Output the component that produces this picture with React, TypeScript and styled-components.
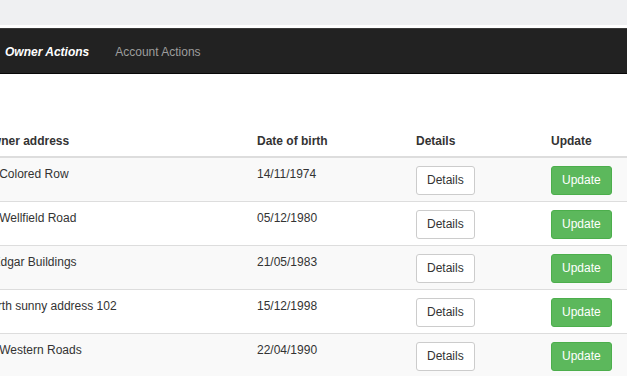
import React from "react";
import styled, { createGlobalStyle } from "styled-components";

const GlobalStyle = createGlobalStyle`
  html, body {
    margin: 0;
    padding: 0;
    background: #ffffff;
    overflow: hidden;
  }
  body {
    font-family: "Liberation Sans", Arial, Helvetica, sans-serif;
    font-size: 12px;
    line-height: 17px;
    color: #333333;
  }
`;

const Page = styled.div`
  width: 627px;
  height: 376px;
  overflow: hidden;
`;

const TopStrip = styled.div`
  height: 25px;
  background: #eff0f2;
`;

const Navbar = styled.nav`
  box-sizing: border-box;
  margin-top: 3px;
  height: 46px;
  padding-top: 2px;
  background: #222222;
  border-top: 1px solid #3a3a3a;
  border-bottom: 1px solid #080808;
  display: flex;
  align-items: center;
`;

const NavList = styled.ul`
  list-style: none;
  margin: 0 0 0 -8px;
  padding: 0;
  display: flex;
`;

const NavLink = styled.li<{ $active?: boolean }>`
  padding: 0 13px;
  font-size: 12px;
  line-height: 17px;
  color: ${(p) => (p.$active ? "#ffffff" : "#9d9d9d")};
  font-weight: ${(p) => (p.$active ? 700 : 400)};
  font-style: ${(p) => (p.$active ? "italic" : "normal")};
`;

const Main = styled.div`
  padding-top: 52px;
  overflow: hidden;
`;

const Table = styled.table`
  margin-left: -24.5px;
  width: 760px;
  table-layout: fixed;
  border-collapse: collapse;
  border-spacing: 0;
`;

const HeadCell = styled.th`
  text-align: left;
  font-weight: 700;
  color: #333333;
  padding: 7px 7px 6px;
  border-bottom: 2px solid #dddddd;
  vertical-align: bottom;
`;

const Row = styled.tr<{ $striped: boolean }>`
  background: ${(p) => (p.$striped ? "#f9f9f9" : "#ffffff")};
`;

const Cell = styled.td`
  padding: 8px 7px 6px;
  vertical-align: top;
  border-top: 1px solid #dddddd;
  white-space: nowrap;
  overflow: hidden;
`;

const Button = styled.button<{ $variant: "default" | "success" }>`
  box-sizing: border-box;
  height: 29px;
  padding: 0 10px;
  font-family: "Liberation Sans", Arial, Helvetica, sans-serif;
  font-size: 12px;
  line-height: 17px;
  border-radius: 3px;
  vertical-align: top;
  cursor: pointer;
  color: ${(p) => (p.$variant === "success" ? "#ffffff" : "#333333")};
  background: ${(p) => (p.$variant === "success" ? "#5cb85c" : "#ffffff")};
  border: 1px solid ${(p) => (p.$variant === "success" ? "#4cae4c" : "#cccccc")};
`;

const rows = [
  { address: "12 Colored Row", dob: "14/11/1974" },
  { address: "17 Wellfield Road", dob: "05/12/1980" },
  { address: "1 Edgar Buildings", dob: "21/05/1983" },
  { address: "North sunny address 102", dob: "15/12/1998" },
  { address: "12 Western Roads", dob: "22/04/1990" },
];

export default function App() {
  return (
    <Page>
      <GlobalStyle />
      <TopStrip />
      <Navbar>
        <NavList>
          <NavLink $active>Owner Actions</NavLink>
          <NavLink>Account Actions</NavLink>
        </NavList>
      </Navbar>
      <Main>
        <Table>
          <colgroup>
            <col style={{ width: 274.5 }} />
            <col style={{ width: 159 }} />
            <col style={{ width: 135 }} />
            <col style={{ width: 191.5 }} />
          </colgroup>
          <thead>
            <tr>
              <HeadCell>Owner address</HeadCell>
              <HeadCell>Date of birth</HeadCell>
              <HeadCell>Details</HeadCell>
              <HeadCell>Update</HeadCell>
            </tr>
          </thead>
          <tbody>
            {rows.map((r, i) => (
              <Row key={i} $striped={i % 2 === 0}>
                <Cell>{r.address}</Cell>
                <Cell>{r.dob}</Cell>
                <Cell>
                  <Button $variant="default">Details</Button>
                </Cell>
                <Cell>
                  <Button $variant="success">Update</Button>
                </Cell>
              </Row>
            ))}
          </tbody>
        </Table>
      </Main>
    </Page>
  );
}
